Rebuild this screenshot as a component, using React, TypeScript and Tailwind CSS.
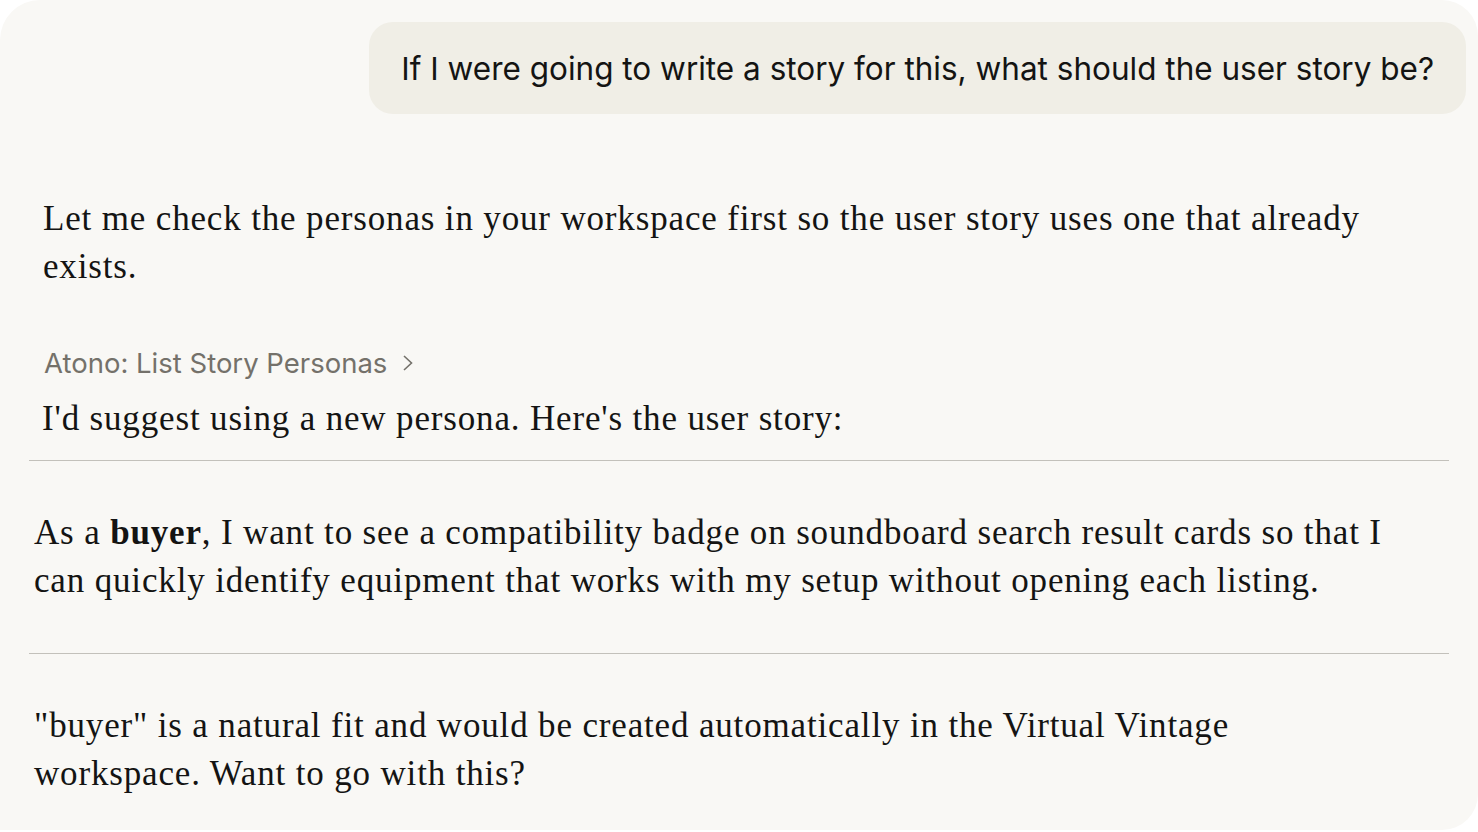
import React from 'react';

const serif = { fontFamily: '"Liberation Serif", "Times New Roman", serif' };
const sans = { fontFamily: 'Inter, Roboto, "Liberation Sans", sans-serif' };

const App: React.FC = () => {
  return (
    <div className="w-full h-[832px] bg-white">
      <div className="h-[830px] bg-[#f9f8f5] rounded-tl-[40px] rounded-tr-[36px] rounded-br-[36px] overflow-hidden">
        <div className="flex justify-end pt-[22px] pr-[12px]">
          <div
            className="h-[92px] flex items-center pt-[2px] px-[32px] rounded-[24px] bg-[#f0eee6] text-[#141413] text-[31.5px]"
            style={sans}
          >
            If I were going to write a story for this, what should the user story be?
          </div>
        </div>

        <div className="text-[#141413] text-[35px] leading-[48px] tracking-[0.024em]" style={serif}>
          <p className="pl-[43px] w-[1385px] mt-[81px]">
            Let me check the personas in your workspace first so the user story uses one that already exists.
          </p>

          <div
            className="pl-[44px] mt-[56px] flex items-center gap-[15px] text-[#74716a] text-[27.5px] leading-[32px] tracking-normal"
            style={sans}
          >
            <span>Atono: List Story Personas</span>
            <svg width="12" height="18" viewBox="0 0 12 18" fill="none" stroke="#74716a" strokeWidth="1.6">
              <path d="M2 2 L9.5 9 L2 16" />
            </svg>
          </div>

          <p className="pl-[42px] mt-[16px]">I'd suggest using a new persona. Here's the user story:</p>

          <div className="mx-[29px] mt-[17px] border-t border-[#c3c1bb]" />

          <p className="pl-[34px] w-[1404px] mt-[48px]">
            As a <strong className="font-bold">buyer</strong>, I want to see a compatibility badge on soundboard search result cards so that I can quickly identify equipment that works with my setup without opening each listing.
          </p>

          <div className="mx-[29px] mt-[48px] border-t border-[#c3c1bb]" />

          <p className="pl-[34px] w-[1380px] mt-[48px]">
            "buyer" is a natural fit and would be created automatically in the Virtual Vintage workspace. Want to go with this?
          </p>
        </div>
      </div>
    </div>
  );
};

export default App;
